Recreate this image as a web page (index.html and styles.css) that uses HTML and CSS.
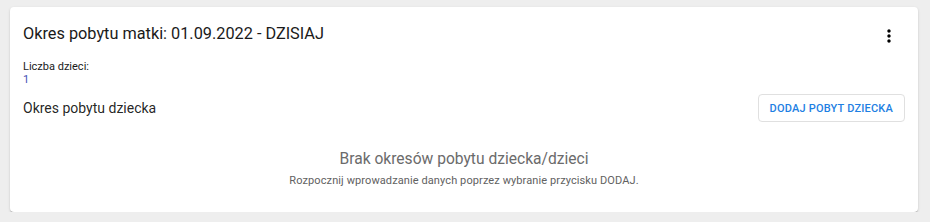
FILE: index.html
```html
<!DOCTYPE html>
<html>
<head>
<meta charset="utf-8">
<title>Okres pobytu</title>
<link rel="stylesheet" href="styles.css">
</head>
<body>
  <div class="card">
    <div class="card-header">
      <p class="title">Okres pobytu matki: 01.09.2022 - DZISIAJ</p>
      <button class="menu-button" title="Więcej">
        <svg width="20" height="20" viewBox="0 0 24 24"><path fill="#000" d="M12 8c1.1 0 2-.9 2-2s-.9-2-2-2-2 .9-2 2 .9 2 2 2zm0 2c-1.1 0-2 .9-2 2s.9 2 2 2 2-.9 2-2-.9-2-2-2zm0 6c-1.1 0-2 .9-2 2s.9 2 2 2 2-.9 2-2-.9-2-2-2z"/></svg>
      </button>
    </div>
    <div class="children-count">
      <p class="label">Liczba dzieci:</p>
      <p class="value">1</p>
    </div>
    <div class="section-row">
      <p class="section-title">Okres pobytu dziecka</p>
      <button class="add-button">Dodaj pobyt dziecka</button>
    </div>
    <div class="empty-state">
      <p class="empty-title">Brak okresów pobytu dziecka/dzieci</p>
      <p class="empty-text">Rozpocznij wprowadzanie danych poprzez wybranie przycisku DODAJ.</p>
    </div>
  </div>
</body>
</html>
```
FILE: styles.css
```css
body{
  margin: 0;
  padding: 7px 12px 0 10px;
  background-color: #eeeeee;
  font-family: Roboto, "Liberation Sans", sans-serif;
  color: rgba(0, 0, 0, 0.87);
}
p{
  margin: 0;
}
.card{
  height: 205px;
  box-sizing: border-box;
  padding: 17px 13px 0 13px;
  background-color: white;
  border-radius: 4px;
  box-shadow: 0 2px 1px -1px rgba(0,0,0,.2), 0 1px 1px 0 rgba(0,0,0,.14), 0 1px 3px 0 rgba(0,0,0,.12);
}
.card-header{
  display: flex;
  justify-content: space-between;
  align-items: flex-start;
}
.title{
  font-size: 16.3px;
  line-height: 20px;
  color: #1a1a1a;
}
.menu-button{
  margin: 2px 6px 0 0;
  padding: 0;
  width: 20px;
  height: 20px;
  border: none;
  background: none;
  cursor: pointer;
}
.children-count{
  margin-top: 14px;
  font-size: 11px;
  line-height: 13px;
}
.label{
  color: #1a1a1a;
}
.value{
  color: #3f51b5;
}
.section-row{
  display: flex;
  justify-content: space-between;
  align-items: center;
  margin-top: 8px;
}
.section-title{
  font-size: 14px;
}
.add-button{
  height: 28px;
  padding: 0 11px;
  border: 1px solid #e0e0e0;
  border-radius: 4px;
  background-color: white;
  color: #1e80e3;
  font-family: Roboto, "Liberation Sans", sans-serif;
  font-size: 11px;
  font-weight: 500;
  letter-spacing: 0.2px;
  text-transform: uppercase;
  cursor: pointer;
}
.empty-state{
  margin-top: 27px;
  text-align: center;
  color: #6b6b6b;
}
.empty-title{
  font-size: 15.6px;
  line-height: 20px;
}
.empty-text{
  margin-top: 5px;
  font-size: 11px;
  line-height: 14px;
  letter-spacing: 0.1px;
  color: #616161;
}
```
